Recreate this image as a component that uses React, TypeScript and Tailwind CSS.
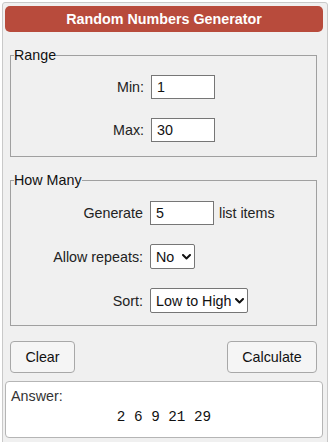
import { useState } from 'react';

function Chevron() {
  return (
    <svg
      className="pointer-events-none absolute right-[4px] top-1/2 -translate-y-1/2"
      width="9"
      height="6"
      viewBox="0 0 9 6"
      fill="none"
    >
      <path d="M1 1l3.5 3.5L8 1" stroke="#111" strokeWidth="2" strokeLinecap="round" strokeLinejoin="round" />
    </svg>
  );
}

function Label({ children }: { children: React.ReactNode }) {
  return <label className="text-right text-[#222]">{children}</label>;
}

const inputCls =
  'h-[24px] w-[64px] border border-[#767676] bg-white pl-[5px] text-[14.3px] text-[#111] outline-none';
const selectCls =
  'h-[25px] appearance-none rounded-[2px] border border-[#767676] bg-white pl-[5px] text-[14.3px] text-[#111] outline-none';

export default function App() {
  const [min, setMin] = useState('1');
  const [max, setMax] = useState('30');
  const [count, setCount] = useState('5');
  const [repeats, setRepeats] = useState('No');
  const [sort, setSort] = useState('Low to High');

  return (
    <div className="font-['Liberation_Sans','Arial',sans-serif] text-[14.3px] leading-[16px]">
      <div className="ml-[2px] mt-[2px] h-[445px] w-[326px] rounded-[3px] border border-[#c9c9c9] bg-[#f0f0f0] pl-[2px] pr-[4px] pt-[3px]">
        <div className="flex h-[26px] items-center justify-center rounded-[5px] bg-[#b84b3c] font-bold text-white">
          Random Numbers Generator
        </div>

        <fieldset className="ml-[5px] mr-[6px] mt-[15px] border border-[#a0a0a0] px-[3px] pb-[14px]">
          <legend className="text-[#111]">Range</legend>
          <div className="mt-[12px] grid grid-cols-[130px_auto] items-center gap-x-[7px] gap-y-[19px]">
            <Label>Min:</Label>
            <input className={inputCls} value={min} onChange={(e) => setMin(e.target.value)} />
            <Label>Max:</Label>
            <input className={inputCls} value={max} onChange={(e) => setMax(e.target.value)} />
          </div>
        </fieldset>

        <fieldset className="ml-[5px] mr-[6px] mt-[15px] border border-[#a0a0a0] px-[3px] pb-[12px]">
          <legend className="text-[#111]">How Many</legend>
          <div className="mt-[13px] grid grid-cols-[129px_auto] items-center gap-x-[7px] gap-y-[19px]">
            <Label>Generate</Label>
            <div className="flex items-center gap-[5px]">
              <input className={inputCls} value={count} onChange={(e) => setCount(e.target.value)} />
              <span className="text-[#222]">list items</span>
            </div>
            <Label>Allow repeats:</Label>
            <div className="relative w-[45px]">
              <select className={`${selectCls} w-[45px]`} value={repeats} onChange={(e) => setRepeats(e.target.value)}>
                <option>No</option>
                <option>Yes</option>
              </select>
              <Chevron />
            </div>
            <Label>Sort:</Label>
            <div className="relative w-[98px]">
              <select className={`${selectCls} w-[98px]`} value={sort} onChange={(e) => setSort(e.target.value)}>
                <option>Low to High</option>
                <option>High to Low</option>
                <option>None</option>
              </select>
              <Chevron />
            </div>
          </div>
        </fieldset>

        <div className="ml-[5px] mr-[6px] mt-[15px] flex justify-between">
          <button className="h-[32px] w-[65px] rounded-[4px] border border-[#a8a8a8] bg-[#f5f5f5] text-[#111]">
            Clear
          </button>
          <button className="h-[32px] w-[90px] rounded-[4px] border border-[#a8a8a8] bg-[#f5f5f5] text-[#111]">
            Calculate
          </button>
        </div>

        <div className="mt-[8px] h-[57px] rounded-[4px] border border-[#b5b5b5] bg-white px-[5px] pt-[6px]">
          <div className="text-[#333]">Answer:</div>
          <div className="mt-[5px] text-center font-['Liberation_Mono','Courier_New',monospace] text-[14.3px] text-[#111]">
            2 6 9 21 29
          </div>
        </div>
      </div>
    </div>
  );
}
